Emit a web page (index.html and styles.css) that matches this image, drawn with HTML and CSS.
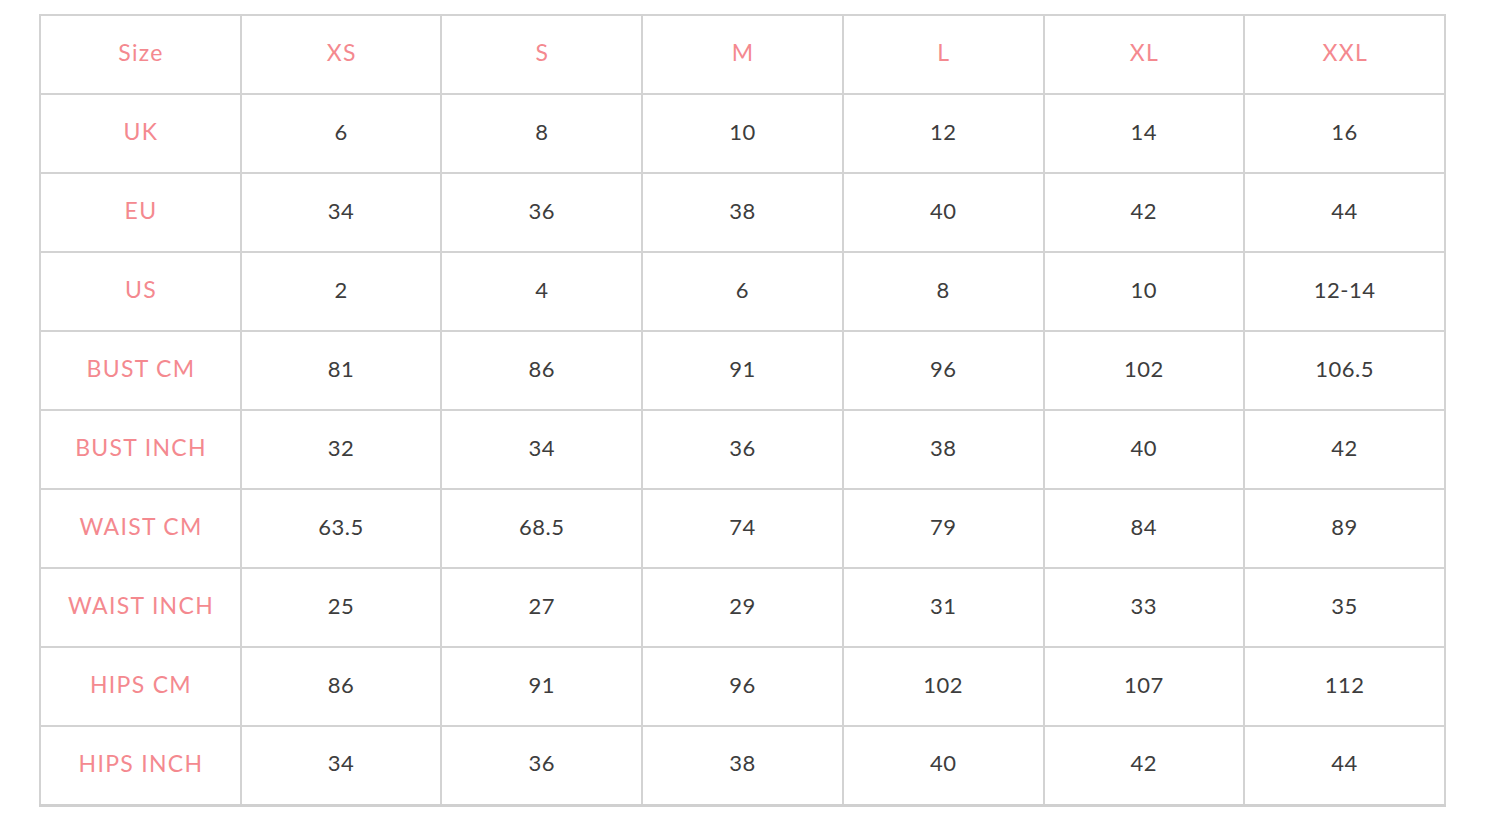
FILE: index.html
```html
<!DOCTYPE html>
<html>
<head>
<meta charset="utf-8">
<link rel="stylesheet" href="styles.css">
</head>
<body>
<div class="wrap">
<table class="sizes">
<tr class="head"><th>Size</th><th>XS</th><th>S</th><th>M</th><th>L</th><th>XL</th><th>XXL</th></tr>
<tr><th>UK</th><td>6</td><td>8</td><td>10</td><td>12</td><td>14</td><td>16</td></tr>
<tr><th>EU</th><td>34</td><td>36</td><td>38</td><td>40</td><td>42</td><td>44</td></tr>
<tr><th>US</th><td>2</td><td>4</td><td>6</td><td>8</td><td>10</td><td>12-14</td></tr>
<tr><th>BUST CM</th><td>81</td><td>86</td><td>91</td><td>96</td><td>102</td><td>106.5</td></tr>
<tr><th>BUST INCH</th><td>32</td><td>34</td><td>36</td><td>38</td><td>40</td><td>42</td></tr>
<tr><th>WAIST CM</th><td>63.5</td><td>68.5</td><td>74</td><td>79</td><td>84</td><td>89</td></tr>
<tr><th>WAIST INCH</th><td>25</td><td>27</td><td>29</td><td>31</td><td>33</td><td>35</td></tr>
<tr><th>HIPS CM</th><td>86</td><td>91</td><td>96</td><td>102</td><td>107</td><td>112</td></tr>
<tr><th>HIPS INCH</th><td>34</td><td>36</td><td>38</td><td>40</td><td>42</td><td>44</td></tr>
</table>
</div>
</body>
</html>
```
FILE: styles.css
```css
html, body {
  margin: 0;
  padding: 0;
  background: #ffffff;
}
.wrap {
  padding: 14px 0 0 39px;
}
.sizes {
  border-collapse: collapse;
  table-layout: fixed;
  width: 1407px;
  font-family: Lato, "Liberation Sans", sans-serif;
  font-size: 22px;
}
.sizes th, .sizes td {
  border: 2px solid #d3d3d3;
  height: 79px;
  padding: 0 0 5px 0;
  box-sizing: border-box;
  text-align: center;
  vertical-align: middle;
}
.sizes th {
  font-weight: normal;
  font-size: 23px;
  letter-spacing: 1.3px;
  padding-left: 1.3px;
  color: #f4898f;
}
.sizes td {
  color: #3d3d3d;
  letter-spacing: 0.5px;
}
.sizes tr:last-child th, .sizes tr:last-child td {
  border-bottom: 3px solid #d0d0d0;
}
```
